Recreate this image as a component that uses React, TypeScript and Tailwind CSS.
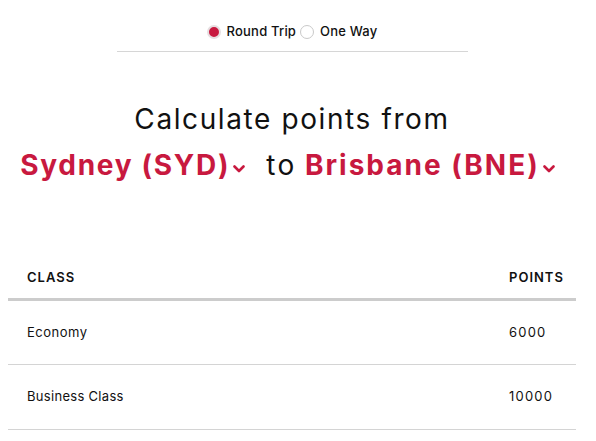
import React from "react";

const RED = "#c8193f";

function Chevron() {
  return (
    <svg width="12" height="8" viewBox="0 0 12 8" className="mt-[8px]">
      <path d="M1.5 1.5 L6 6 L10.5 1.5" fill="none" stroke={RED} strokeWidth="2.6" strokeLinecap="round" strokeLinejoin="round" />
    </svg>
  );
}

function Radio({ checked, label }: { checked: boolean; label: string }) {
  return (
    <label className="flex items-center gap-[6px]">
      <span
        className={
          checked
            ? "w-[14px] h-[14px] rounded-full bg-[#c8193f] border-[2px] border-[#e6dfe1] box-border"
            : "w-[14px] h-[14px] rounded-full bg-white border-[1.5px] border-[#c9c9c9] box-border"
        }
      />
      <span className="text-[13px] font-medium text-[#111] tracking-[0.2px]">{label}</span>
    </label>
  );
}

export default function App() {
  return (
    <div className="w-[584px] bg-white min-h-[441px]" style={{ fontFamily: "Inter, 'Noto Sans', sans-serif" }}>
      <div className="flex justify-center gap-[4px] pt-[24px] h-[40px]">
        <Radio checked label="Round Trip" />
        <Radio checked={false} label="One Way" />
      </div>
      <div className="mx-auto mt-[11px] w-[351px] h-px bg-[#d6d6d6]" />
      <div className="mt-[49px] text-center text-[28px] leading-[36px] text-[#111] tracking-[1.6px]">
        Calculate points from
      </div>
      <div className="mt-[10px] pr-[9px] flex justify-center items-center text-[28px] leading-[36px]">
        <span className="font-bold text-[#c8193f] tracking-[1.7px] mr-[3px]">Sydney (SYD)</span>
        <Chevron />
        <span className="ml-[21px] mr-[8px] text-[#111] tracking-[2.5px]">to</span>
        <span className="font-bold text-[#c8193f] tracking-[2px] mr-[3px]">Brisbane (BNE)</span>
        <Chevron />
      </div>
      <div className="mx-[8px] mt-[75px]">
        <div className="flex h-[43px] items-center border-b-[3px] border-[#cccccc] text-[13px] font-semibold tracking-[1px] text-[#111]">
          <div className="flex-1 pl-[19px]">CLASS</div>
          <div className="w-[67px]">POINTS</div>
        </div>
        <div className="flex h-[64px] items-center border-b border-[#d4d4d4] text-[13px] tracking-[0.5px] text-[#111]">
          <div className="flex-1 pl-[19px]">Economy</div>
          <div className="w-[67px] tracking-[1.2px]">6000</div>
        </div>
        <div className="flex h-[65px] items-center border-b border-[#d4d4d4] text-[13px] tracking-[0.3px] text-[#111]">
          <div className="flex-1 pl-[19px]">Business Class</div>
          <div className="w-[67px] tracking-[1.2px]">10000</div>
        </div>
      </div>
    </div>
  );
}
